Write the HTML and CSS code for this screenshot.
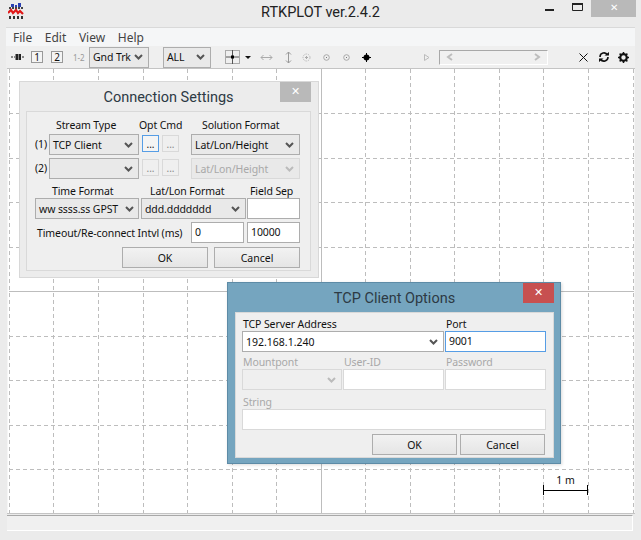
FILE: index.html
```html
<!DOCTYPE html>
<html>

  <head>
    <meta charset="UTF-8">
    <title>RTKPLOT ver.2.4.2</title>
    <link rel="stylesheet" href="styles.css">
  </head>

  <body>
    <svg class="defs">
      <symbol id="chev" viewBox="0 0 9 6">
        <path d="M1 1l3.5 3.5L8 1" fill="none" stroke="currentColor" stroke-width="2"/>
      </symbol>
      <symbol id="ring" viewBox="0 0 7 7">
        <circle cx="3.5" cy="3.5" r="2.8" fill="none" stroke="#a8a8a8"/>
        <rect x="3" y="3" width="1" height="1" fill="#777"/>
      </symbol>
    </svg>

    <div class="app">
      <div class="titlebar">
        <svg class="appicon" width="16" height="16" viewBox="0 0 16 16">
          <path d="M3 1h3v3H3zM7 2h2v2H7zM10 0h3v4h-3z" fill="#2b3fb0"/>
          <path d="M1 5h14" stroke="#444" stroke-width="2" stroke-dasharray="2 1"/>
          <path d="M0 10l3-3 2 3 3-3 2 3 2-2 3 3" fill="none" stroke="#e01818" stroke-width="2.2"/>
          <path d="M1 14.500h14" stroke="#333" stroke-width="3" stroke-dasharray="2 2"/>
        </svg>
        <div class="wintitle">RTKPLOT ver.2.4.2</div>
        <div class="wincontrols">
          <svg width="9" height="3" viewBox="0 0 9 3"><rect width="9" height="2" y="1" fill="#222"/></svg>
          <svg width="11" height="8" viewBox="0 0 11 8"><path d="M.5 1.5h10v6H.5z" fill="none" stroke="#222"/><rect width="11" height="2" fill="#222"/></svg>
          <div class="winclose">&#10005;</div>
        </div>
      </div>

      <div class="menubar">
        <span>File</span>
        <span>Edit</span>
        <span>View</span>
        <span>Help</span>
      </div>

      <div class="toolbar">
        <svg class="t-bars" width="13" height="6" viewBox="0 0 13 6">
          <path d="M0 3h2M3 3h1M5 0h1.500v6H5zM8 0h1.500v6H8zM11 3h2" stroke="#222" fill="#222"/>
        </svg>
        <div class="tbtn t-one">1</div>
        <div class="tbtn t-two">2</div>
        <div class="t-both">1-2</div>
        <div class="combo t-plot">Gnd Trk<svg class="chev"><use href="#chev"/></svg></div>
        <div class="combo t-sat">ALL<svg class="chev"><use href="#chev"/></svg></div>
        <svg class="t-cross" width="16" height="15" viewBox="0 0 16 15">
          <rect x=".5" y=".5" width="14" height="13" fill="none" stroke="#aaa"/>
          <path d="M7.500 0v14M1 7h13" stroke="#555"/>
          <rect x="6" y="5.500" width="3" height="3" fill="#000"/>
        </svg>
        <svg class="t-tri" width="6" height="3" viewBox="0 0 6 3"><path d="M0 0h6L3 3z" fill="#111"/></svg>
        <svg class="t-h" width="13" height="7" viewBox="0 0 13 7"><path d="M1 3.500h11M3.500 1L1 3.500 3.500 6M9.500 1L12 3.500 9.500 6" fill="none" stroke="#aaa"/></svg>
        <svg class="t-v" width="7" height="13" viewBox="0 0 7 13"><path d="M3.500 1v11M1 3.500L3.500 1 6 3.500M1 9.500L3.500 12 6 9.500" fill="none" stroke="#999"/></svg>
        <svg class="t-target" width="9" height="9" viewBox="0 0 9 9"><circle cx="4.500" cy="4.500" r="3.500" fill="none" stroke="#bbb" stroke-dasharray="1.500 1"/><path d="M4.500 3v3M3 4.500h3" stroke="#aaa"/></svg>
        <svg class="t-ring1" width="7" height="7"><use href="#ring"/></svg>
        <svg class="t-ring2" width="7" height="7"><use href="#ring"/></svg>
        <svg class="t-dot" width="9" height="9" viewBox="0 0 9 9"><circle cx="4.500" cy="4.500" r="3" fill="#000"/><path d="M4.500 0v9M0 4.500h9" stroke="#000"/></svg>
        <svg class="t-play" width="6" height="7" viewBox="0 0 6 7"><path d="M.5.500v6L5 3.500z" fill="none" stroke="#bbb"/></svg>
        <div class="scroller">
          <svg width="7" height="8" viewBox="0 0 7 8"><path d="M6 1L2 4l4 3" fill="none" stroke="#bdbdbd" stroke-width="2"/></svg>
          <svg width="7" height="8" viewBox="0 0 7 8"><path d="M1 1l4 3-4 3" fill="none" stroke="#bdbdbd" stroke-width="2"/></svg>
        </div>
        <svg class="t-x" width="9" height="9" viewBox="0 0 9 9"><path d="M.5.500l8 8M8.500.500l-8 8" stroke="#111"/></svg>
        <svg class="t-sync" width="10" height="10" viewBox="0 0 10 10"><path d="M8.500 3A4 4 0 0 0 1 5M1.500 7A4 4 0 0 0 9 5" fill="none" stroke="#111" stroke-width="1.600"/><path d="M5.500 3.500H10V0zM4.500 6.500H0V10z" fill="#111"/></svg>
        <svg class="t-gear" width="11" height="11" viewBox="0 0 11 11"><circle cx="5.500" cy="5.500" r="3.300" fill="none" stroke="#111" stroke-width="2.200"/><path d="M5.500 0v11M0 5.500h11M1.600 1.600l7.800 7.800M9.400 1.600L1.600 9.400" stroke="#111" stroke-width="1.500" stroke-dasharray="2 7"/></svg>
      </div>

      <svg class="plot" width="628" height="446" viewBox="0 0 628 446">
        <rect x=".5" y=".5" width="627" height="445" fill="#fff" stroke="none"/>
        <g class="grid">
          <path d="M2.500 1v445M46.500 1v445M91.500 1v445M136.500 1v445M180.500 1v445M225.500 1v445M269.500 1v445M358.500 1v445M403.500 1v445M447.500 1v445M492.500 1v445M536.500 1v445M581.500 1v445M626.500 1v445"/>
          <path d="M2 45.500h625M2 90.500h625M2 134.500h625M2 179.500h625M2 268.500h625M2 312.500h625M2 357.500h625M2 401.500h625"/>
        </g>
        <path d="M314.500 1v445M2 223.500h625" stroke="#bdbdbd" fill="none"/>
        <path d="M0 .5h628M0 445.500h628" stroke="#c4c4c4" fill="none"/>
        <path d="M536.500 417v10M580.500 417v10M536 422.500h45" stroke="#000" fill="none"/>
        <text class="scale" x="558.500" y="416" text-anchor="middle">1 m</text>
      </svg>

      <div class="statusbar"></div>

      <div class="dialog conn">
        <div class="dlghead">
          <span>Connection Settings</span>
          <div class="dlgclose">&#10005;</div>
        </div>
        <div class="panel">
          <div class="streams">
            <span></span>
            <label class="l-stream">Stream Type</label>
            <label class="l-optcmd">Opt Cmd</label>
            <span></span>
            <label class="l-sol">Solution Format</label>

            <label class="num">(1)</label>
            <div class="combo">TCP Client<svg class="chev"><use href="#chev"/></svg></div>
            <button class="dots active">...</button>
            <button class="dots">...</button>
            <span></span>
            <div class="combo">Lat/Lon/Height<svg class="chev"><use href="#chev"/></svg></div>

            <label class="num">(2)</label>
            <div class="combo"><svg class="chev"><use href="#chev"/></svg></div>
            <button class="dots">...</button>
            <button class="dots">...</button>
            <span></span>
            <div class="combo off">Lat/Lon/Height<svg class="chev"><use href="#chev"/></svg></div>
          </div>

          <div class="formats">
            <label class="l-time">Time Format</label>
            <label class="l-lat">Lat/Lon Format</label>
            <label class="l-sep">Field Sep</label>
            <div class="combo w-time">ww ssss.ss GPST<svg class="chev"><use href="#chev"/></svg></div>
            <div class="combo w-lat">ddd.ddddddd<svg class="chev"><use href="#chev"/></svg></div>
            <div class="field"></div>
          </div>

          <div class="timeout">
            <label>Timeout/Re-connect Intvl (ms)</label>
            <div class="field w-to">0</div>
            <div class="field w-to">10000</div>
          </div>

          <div class="actions">
            <button class="btn">OK</button>
            <button class="btn">Cancel</button>
          </div>
        </div>
      </div>

      <div class="dialog tcp">
        <div class="dlghead">
          <span>TCP Client Options</span>
          <div class="dlgclose red">&#10005;</div>
        </div>
        <div class="panel">
          <div class="tcpgrid">
            <label class="span2">TCP Server Address</label>
            <label>Port</label>
            <div class="combo white span2">192.168.1.240<svg class="chev"><use href="#chev"/></svg></div>
            <div class="field focus">9001</div>

            <label class="dis gap">Mountpont</label>
            <label class="dis gap">User-ID</label>
            <label class="dis gap">Password</label>
            <div class="combo white off"><svg class="chev"><use href="#chev"/></svg></div>
            <div class="field off"></div>
            <div class="field off"></div>

            <label class="dis gap2 span3">String</label>
            <div class="field off span3"></div>
          </div>
          <div class="actions tcpact">
            <button class="btn">OK</button>
            <button class="btn">Cancel</button>
          </div>
        </div>
      </div>
    </div>
  </body>

</html>
```

FILE: styles.css
```css
* {
  margin: 0;
  padding: 0;
  box-sizing: border-box;
}

body {
  width: 641px;
  height: 540px;
  overflow: hidden;
  font-family: "Noto Sans", "Open Sans", sans-serif;
  font-size: 10.5px;
  letter-spacing: -.1px;
  color: #111;
}

.defs {
  position: absolute;
  width: 0;
  height: 0;
}

.app {
  position: relative;
  display: flex;
  flex-direction: column;
  width: 641px;
  height: 540px;
  background: #ebebeb;
}

/* main window */
.titlebar {
  display: grid;
  grid-template-columns: 1fr auto 1fr;
  align-items: start;
  height: 27px;
}

.appicon {
  margin: 3px 0 0 8px;
}

.wintitle {
  margin-top: 3px;
  font-family: Roboto, sans-serif;
  font-size: 14.5px;
  line-height: 20px;
  letter-spacing: 0;
  color: #222;
}

.wincontrols {
  display: flex;
  justify-content: flex-end;
  align-items: flex-start;
  padding-right: 5px;
}

.wincontrols svg:nth-child(1) {
  margin: 8px 18px 0 0;
}

.wincontrols svg:nth-child(2) {
  margin: 3px 8px 0 0;
}

.winclose {
  width: 45px;
  height: 17px;
  background: #b9b9b9;
  color: #fff;
  font-size: 10px;
  line-height: 15px;
  text-align: center;
}

.menubar {
  display: flex;
  align-items: center;
  height: 19px;
  margin: 0 6px;
  padding-left: 7px;
  background: #f5f6f7;
  border-top: 1px solid #d9d9d9;
  font-size: 12px;
  letter-spacing: 0;
  color: #444;
}

.menubar span {
  margin-right: 12.600px;
}

.toolbar {
  display: flex;
  align-items: center;
  height: 22px;
  margin: 0 6px;
  padding-left: 5px;
  background: #efefef;
}

.toolbar > * {
  flex: none;
}

.tbtn {
  width: 12px;
  height: 12px;
  border: 1px solid #999;
  background: #f4f4f4;
  font-size: 10px;
  line-height: 10px;
  text-align: center;
}

.t-one { margin-left: 7px; }
.t-two { margin-left: 8px; }
.t-both { width: 11px; margin-left: 10px; font-size: 8px; white-space: nowrap; color: #999; }
.t-plot { width: 60px; margin-left: 5px; }
.t-sat { width: 48px; margin-left: 14px; }
.t-cross { margin-left: 14px; }
.t-tri { margin-left: 4px; }
.t-h { margin-left: 9px; }
.t-v { margin-left: 12px; }
.t-target { margin-left: 10px; }
.t-ring1 { margin-left: 12px; }
.t-ring2 { margin-left: 13px; }
.t-dot { margin-left: 12px; }
.t-play { margin-left: 53px; }
.t-x { margin-left: 31px; }
.t-sync { margin-left: 11px; }
.t-gear { margin-left: 9px; }

.scroller {
  display: flex;
  justify-content: space-between;
  align-items: center;
  width: 109px;
  height: 15px;
  margin-left: 9px;
  padding: 0 6px;
  background: #f0f0f0;
  border: 1px solid #fff;
  border-top-color: #a8a8a8;
  border-left-color: #a8a8a8;
}

.plot {
  display: block;
  margin-left: 7px;
}

.grid path {
  fill: none;
  stroke: #bdbdbd;
  stroke-dasharray: 4 3;
}

.scale {
  font-size: 10.5px;
  fill: #111;
}

.statusbar {
  height: 16px;
  margin: 1px 8px 0 7px;
  background: #f0f0f0;
  border-top: 1px solid #a8a8a8;
  border-right: 1px solid #fff;
  border-bottom: 1px solid #fff;
}

/* dialogs */
.dialog {
  position: absolute;
  display: flex;
  flex-direction: column;
}

.conn {
  left: 19px;
  top: 81px;
  width: 300px;
  height: 197px;
  padding: 0 7px 6px 6px;
  background: #ececec;
  border: 1px solid #d8d8d8;
}

.tcp {
  left: 227px;
  top: 282px;
  width: 334px;
  height: 182px;
  padding: 0 6px 5px 7px;
  background: #75a5bf;
  border: 1px solid #5d8ba6;
  box-shadow: 1px 1px 3px rgba(0, 0, 0, .15);
}

.dlghead {
  position: relative;
  flex: none;
  height: 29px;
  font-family: Roboto, sans-serif;
  font-size: 14.5px;
  line-height: 32px;
  letter-spacing: 0;
  text-align: center;
  color: #2d3a44;
}

.dlgclose {
  position: absolute;
  top: 0;
  right: 0;
  width: 31px;
  height: 20px;
  background: #b9b9b9;
  color: #fff;
  font-size: 11px;
  line-height: 19px;
}

.dlgclose.red {
  background: #c75050;
}

.panel {
  flex: 1;
  background: #efefef;
  border: 1px solid #d9d9d9;
}

.streams {
  display: grid;
  grid-template-columns: 22px 90px 20px 20px 12px 109px;
  grid-template-rows: 14px 21px 21px;
  row-gap: 3px;
  padding-top: 5px;
}

label {
  line-height: 14px;
  white-space: nowrap;
}

.streams label,
.formats label {
  line-height: 16px;
}

.l-stream { padding-left: 7px; }
.l-optcmd { grid-column: span 2; }
.l-sol { padding-left: 11px; }
.l-time { padding-left: 17px; }
.l-lat { padding-left: 9px; }
.l-sep { padding-left: 3px; }

.streams .num {
  line-height: 21px;
  text-align: right;
  padding-right: 2px;
}

.combo {
  display: flex;
  justify-content: space-between;
  align-items: center;
  height: 21px;
  padding: 0 5px 0 3px;
  background: #e9e9e9;
  border: 1px solid #adadad;
  white-space: nowrap;
}

.chev {
  flex: none;
  width: 9px;
  height: 6px;
  margin-left: auto;
  color: #555;
}

.combo.off {
  border-color: #d9d9d9;
  color: #a8a8a8;
}

.combo.off .chev {
  color: #bbb;
}

.combo.white {
  background: #fff;
  letter-spacing: 0;
}

.combo.white.off {
  background: #efefef;
}

.dots {
  justify-self: end;
  width: 17px;
  height: 17px;
  margin-top: 1px;
  background: #efefef;
  border: 1px solid #d9d9d9;
  font-family: inherit;
  font-size: 10px;
  line-height: 12px;
  color: #888;
}

.dots.active {
  background: #f4f4f4;
  border-color: #569de5;
  color: #111;
}

.formats {
  display: grid;
  grid-template-columns: 106px 106px 53px;
  grid-template-rows: 14px 21px;
  row-gap: 1px;
  margin: 4px 0 0 8px;
}

.w-time { width: 104px; padding-right: 4px; }
.w-lat { width: 105px; }

.field {
  height: 21px;
  padding: 0 3px;
  background: #fff;
  border: 1px solid #adadad;
  line-height: 19px;
}

.field.off {
  border-color: #d9d9d9;
}

.field.focus {
  border-color: #569de5;
}

.timeout {
  display: flex;
  align-items: center;
  gap: 3px;
  margin-top: 3px;
  padding: 0 10px;
}

.timeout label {
  margin-right: auto;
}

.w-to {
  width: 53px;
}

.actions {
  display: flex;
  justify-content: flex-end;
  gap: 6px;
  margin-top: 4px;
  padding-right: 10px;
}

.btn {
  width: 86px;
  height: 21px;
  background: linear-gradient(#f2f2f2, #e5e5e5);
  border: 1px solid #adadad;
  font-family: inherit;
  font-size: 10.5px;
  color: #111;
}

.tcpgrid {
  display: grid;
  grid-template-columns: 100px 101px 101px;
  column-gap: 1px;
  padding: 4px 0 0 6px;
}

.tcpgrid label {
  padding-left: 1px;
}

.span2 { grid-column: span 2; }
.span3 { grid-column: span 3; }
.dis { color: #a8a8a8; }
.gap { margin-top: 3px; }
.gap2 { margin-top: 5px; }

.tcpact {
  gap: 3px;
  padding-right: 8px;
}

.tcpact .btn {
  width: 85px;
}
```
